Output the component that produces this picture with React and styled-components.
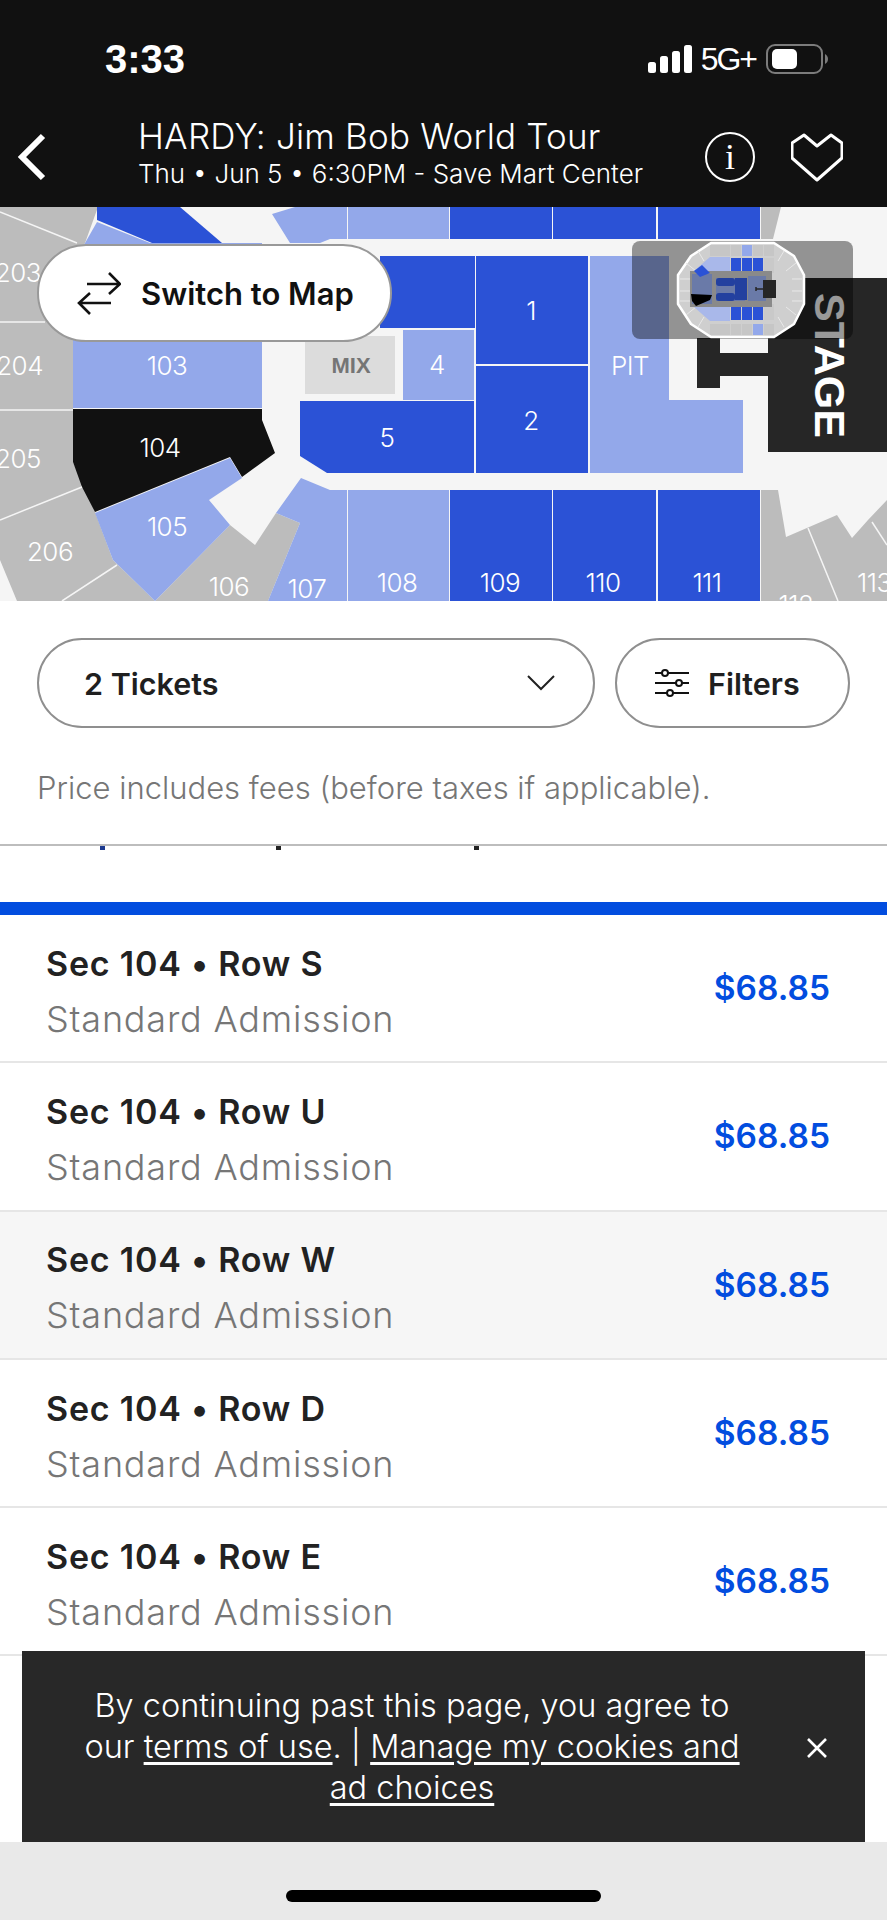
import styled, { createGlobalStyle } from "styled-components";

const FONT = `"Inter", "Lato", sans-serif`;
const DARK = "#2b52d6";
const LIGHT = "#93a8ea";
const GRAY = "#bcbcbc";
const BLUE = "#024ddf";

const tickets = [
  { row: "S" },
  { row: "U" },
  { row: "W", active: true },
  { row: "D" },
  { row: "E" },
];

const sections = [
  { fill: GRAY, points: "0,207 98,207 85,243 73,270 73,462 95,512 113,560 155,601 17,601 0,560" },
  { fill: GRAY, points: "155,601 230,525 255,545 276,513 300,523 268,601" },
  { fill: GRAY, points: "761,207 781,207 773,239 761,239" },
  { fill: GRAY, points: "761,490 778,490 786,537 837,515 852,538 868,520 887,500 887,601 761,601" },
  { fill: DARK, points: "97,207 180,207 222,243 152,243 97,220" },
  { fill: LIGHT, points: "85,243 97,222 150,243 262,243 262,408 73,408 73,270" },
  { fill: LIGHT, points: "272,214 295,207 347,207 347,239 330,239 320,243 290,243" },
  { fill: LIGHT, points: "348,207 449,207 449,239 348,239" },
  { fill: DARK, points: "450,207 552,207 552,239 450,239" },
  { fill: DARK, points: "553,207 656,207 656,239 553,239" },
  { fill: DARK, points: "658,207 760,207 760,239 658,239" },
  { fill: DARK, points: "380,256 475,256 475,328 380,328" },
  { fill: DARK, points: "476,256 588,256 588,364 476,364" },
  { fill: DARK, points: "476,366 588,366 588,473 476,473" },
  { fill: LIGHT, points: "403,330 474,330 474,400 403,400" },
  { fill: "#dcdcdc", points: "305,336 395,336 395,394 305,394" },
  { fill: DARK, points: "300,401 474,401 474,473 327,473 300,456" },
  { fill: LIGHT, points: "590,256 669,256 669,400 743,400 743,473 590,473" },
  { fill: LIGHT, points: "301,478 330,490 347,490 347,601 268,601 300,523 276,513" },
  { fill: LIGHT, points: "348,490 449,490 449,601 348,601" },
  { fill: DARK, points: "450,490 552,490 552,601 450,601" },
  { fill: DARK, points: "553,490 656,490 656,601 553,601" },
  { fill: DARK, points: "658,490 760,490 760,601 658,601" },
  { fill: "#111", points: "73,409 262,409 262,420 275,453 242,477 230,457 95,512 82,487 73,462" },
  { fill: LIGHT, points: "95,513 230,458 242,478 209,500 230,525 155,601 113,560" },
  { fill: "#262626", points: "768,278 887,278 887,452 768,452 768,376 720,376 720,388 697,388 697,338 720,338 720,353 768,353" },
];

const seams = [
  "0,212 77,243",
  "0,322 45,322",
  "0,410 73,410",
  "0,520 82,487",
  "62,601 117,565",
  "808,528 838,601",
  "872,522 887,545",
];

const labels = [
  { text: "203", x: 41, y: 272, anchor: "end" },
  { text: "204", x: 43, y: 365, anchor: "end" },
  { text: "205", x: 41, y: 458, anchor: "end" },
  { text: "206", x: 50, y: 551 },
  { text: "103", x: 167, y: 365 },
  { text: "104", x: 160, y: 447 },
  { text: "105", x: 167, y: 526 },
  { text: "106", x: 229, y: 586 },
  { text: "107", x: 307, y: 588 },
  { text: "108", x: 397, y: 582 },
  { text: "109", x: 500, y: 582 },
  { text: "110", x: 603, y: 582 },
  { text: "111", x: 707, y: 582 },
  { text: "112", x: 796, y: 604 },
  { text: "113", x: 857, y: 582, anchor: "start" },
  { text: "1", x: 531, y: 310 },
  { text: "2", x: 531, y: 420 },
  { text: "4", x: 437, y: 364 },
  { text: "5", x: 387, y: 437 },
  { text: "PIT", x: 630, y: 365 },
];

function SeatMap() {
  return (
    <MapSvg viewBox="0 207 887 394">
      {sections.map((s) => (
        <polygon key={s.points} points={s.points} fill={s.fill} />
      ))}
      {seams.map((points) => (
        <polyline key={points} points={points} stroke="#f5f5f5" strokeWidth="1.5" fill="none" />
      ))}
      {labels.map((l) => (
        <text
          key={l.text}
          x={l.x}
          y={l.y}
          textAnchor={l.anchor || "middle"}
          dominantBaseline="central"
          fill="#fff"
          fontSize="26"
          fontWeight="300"
          letterSpacing="-0.5"
          fontFamily={FONT}
        >
          {l.text}
        </text>
      ))}
      <text
        x="351"
        y="365"
        textAnchor="middle"
        dominantBaseline="central"
        fill="#757575"
        fontSize="22"
        fontWeight="700"
        fontFamily={`"Liberation Sans", sans-serif`}
      >
        MIX
      </text>
      <text
        transform="translate(830 365.5) rotate(90)"
        textAnchor="middle"
        dominantBaseline="central"
        fill="#fff"
        fontSize="43"
        fontWeight="700"
        fontFamily={`"Liberation Sans", sans-serif`}
      >
        STAGE
      </text>
    </MapSvg>
  );
}

function MiniMap() {
  const tops = [55, 66, 77, 88];
  const colsTop = [34, 44, 55, 66, 77, 88];
  return (
    <svg width="130" height="98" viewBox="0 0 130 98">
      <polygon
        points="35,2 98,2 118,15 128,34 128,63 118,83 98,96 35,96 15,83 2,63 2,34 15,15"
        fill="#cfcfcf"
        stroke="#fff"
        strokeWidth="2.5"
        strokeLinejoin="round"
      />
      {colsTop.map((x) => (
        <g key={x}>
          <rect x={x} y="4" width="10" height="11" fill={x === 66 ? LIGHT : "#c6c6c6"} />
          <rect x={x} y="83" width="10" height="11" fill={x === 77 ? LIGHT : "#c6c6c6"} />
        </g>
      ))}
      <path
        d="M4 38H14M4 50H14M4 60H14M116 38H126M116 50H126M116 60H126M10 22L20 30M10 74L20 66M120 22L110 30M120 74L110 66M22 10L28 20M22 86L28 76M108 10L102 20M108 86L102 76"
        stroke="#e8e8e8"
        strokeWidth="1"
        fill="none"
      />
      <polygon points="18,30 34,16 54,16 54,80 34,80 18,66" fill="#a9b8ea" />
      {tops.map((x) => (
        <g key={x}>
          <rect x={x} y="17" width="10" height="15" fill={x === 88 ? "#c9c9c9" : DARK} />
          <rect x={x} y="63" width="10" height="16" fill={x === 88 ? "#c9c9c9" : DARK} />
        </g>
      ))}
      <rect x="14" y="30" width="82" height="36" fill="#8a8a8a" />
      <rect x="16" y="33" width="20" height="30" fill="#6a7aa8" />
      <rect x="72" y="35" width="18" height="25" fill="#6a7aa8" />
      <rect x="40" y="37" width="29" height="23" fill="#6a7aa8" />
      <rect x="40" y="37" width="19" height="8" rx="3" fill="#23409f" />
      <rect x="59" y="37" width="12" height="22" fill="#23409f" />
      <rect x="40" y="52" width="19" height="8" rx="3" fill="#23409f" />
      <polygon points="15,53 36,54 34,59 20,65 16,60" fill="#000" />
      <polygon points="18,30 26,24 34,32 24,36" fill={DARK} />
      <rect x="87" y="39" width="13" height="18" fill="#262626" />
      <path d="M80 46V50M80 48H87" stroke="#262626" strokeWidth="1.5" fill="none" />
    </svg>
  );
}

export default function App() {
  return (
    <>
      <GlobalStyle />
      <Page>
        <Header>
          <StatusBar>
            <Clock>3:33</Clock>
            <StatusIcons>
              <svg width="45" height="28" viewBox="0 0 45 28">
                <rect x="0" y="17" width="8" height="11" rx="2.5" fill="#fff" />
                <rect x="12" y="11" width="8" height="17" rx="2.5" fill="#fff" />
                <rect x="24" y="6" width="8" height="22" rx="2.5" fill="#fff" />
                <rect x="36" y="0" width="8" height="28" rx="2.5" fill="#fff" />
              </svg>
              <Network>5G+</Network>
              <svg width="63" height="30" viewBox="0 0 63 30">
                <rect x="1" y="1" width="55" height="28" rx="8" fill="none" stroke="#7c7c7c" strokeWidth="2" />
                <rect x="6" y="5" width="25" height="20" rx="5" fill="#fff" />
                <path d="M59 10c2 1 3 3 3 5s-1 4-3 5z" fill="#7c7c7c" />
              </svg>
            </StatusIcons>
          </StatusBar>
          <NavBar>
            <BackButton>
              <svg width="30" height="48" viewBox="0 0 30 48">
                <path d="M26 3L5 24l21 21" fill="none" stroke="#fff" strokeWidth="6" />
              </svg>
            </BackButton>
            <EventInfo>
              <EventTitle>HARDY: Jim Bob World Tour</EventTitle>
              <EventMeta>Thu • Jun 5 • 6:30PM - Save Mart Center</EventMeta>
            </EventInfo>
            <InfoIcon>i</InfoIcon>
            <HeartIcon width="52" height="49" viewBox="0 0 52 49">
              <path
                d="M13 2L26 13 40 2 51 10V25L26 47 1 25V10z"
                fill="none"
                stroke="#fff"
                strokeWidth="3"
                strokeLinejoin="round"
              />
            </HeartIcon>
          </NavBar>
        </Header>

        <MapArea>
          <SeatMap />
          <SwitchButton>
            <svg width="44" height="43" viewBox="0 0 44 43">
              <path
                d="M10 12H43M32 1l11 11-11 10M34 31H2M13 21L2 31l11 11"
                fill="none"
                stroke="#111"
                strokeWidth="2.6"
              />
            </svg>
            Switch to Map
          </SwitchButton>
          <Overview>
            <MiniMap />
          </Overview>
        </MapArea>

        <Controls>
          <ControlRow>
            <TicketSelect>
              2 Tickets
              <svg width="28" height="16" viewBox="0 0 28 16">
                <path d="M1 1l13 13L27 1" fill="none" stroke="#222" strokeWidth="2" />
              </svg>
            </TicketSelect>
            <FilterButton>
              <svg width="34" height="30" viewBox="0 0 34 30">
                <path d="M0 5H34M0 15H34M0 25H34" stroke="#111" strokeWidth="2.2" />
                <circle cx="10" cy="5" r="3" fill="#fff" stroke="#111" strokeWidth="2" />
                <circle cx="24" cy="15" r="3" fill="#fff" stroke="#111" strokeWidth="2" />
                <circle cx="15" cy="25" r="3" fill="#fff" stroke="#111" strokeWidth="2" />
              </svg>
              Filters
            </FilterButton>
          </ControlRow>
          <PriceNote>Price includes fees (before taxes if applicable).</PriceNote>
        </Controls>

        <ClippedRow>
          <Speck $left={100} $color="#1c3a8f" />
          <Speck $left={276} />
          <Speck $left={474} />
        </ClippedRow>
        <Accent />

        {tickets.map((t) => (
          <TicketRow key={t.row} $active={t.active}>
            <div>
              <RowTitle>Sec 104 • Row {t.row}</RowTitle>
              <RowSub>Standard Admission</RowSub>
            </div>
            <Price>$68.85</Price>
          </TicketRow>
        ))}

        <HomeArea>
          <HomeBar />
        </HomeArea>

        <CookieBanner>
          <CookieText>
            By continuing past this page, you agree to our <a>terms of use</a>. |{" "}
            <a>Manage my cookies and ad choices</a>
          </CookieText>
          <CloseIcon width="22" height="22" viewBox="0 0 22 22">
            <path d="M2 2l18 18M20 2L2 20" stroke="#fff" strokeWidth="2.6" />
          </CloseIcon>
        </CookieBanner>
      </Page>
    </>
  );
}

const GlobalStyle = createGlobalStyle`
  html, body {
    margin: 0;
    padding: 0;
    background: #fff;
  }
  * {
    box-sizing: border-box;
  }
`;

const Page = styled.div`
  position: relative;
  width: 887px;
  height: 1920px;
  display: flex;
  flex-direction: column;
  overflow: hidden;
  background: #fff;
  font-family: ${FONT};
`;

const Header = styled.header`
  height: 207px;
  background: #111;
  color: #fff;
`;

const StatusBar = styled.div`
  height: 115px;
  padding: 44px 58px 0 105px;
  display: flex;
  justify-content: space-between;
  align-items: flex-start;
`;

const Clock = styled.div`
  font-family: "Liberation Sans", sans-serif;
  font-size: 40px;
  line-height: 30px;
  font-weight: 700;
`;

const StatusIcons = styled.div`
  display: flex;
  align-items: center;
  gap: 8px;
`;

const Network = styled.span`
  font-family: "Liberation Sans", sans-serif;
  font-size: 32px;
  letter-spacing: -2px;
  line-height: 30px;
  margin-right: 2px;
`;

const NavBar = styled.div`
  display: flex;
  align-items: center;
  padding: 0 44px 0 17px;
`;

const BackButton = styled.div`
  width: 121px;
  margin-top: 8px;
  display: flex;
`;

const EventInfo = styled.div`
  flex: 1;
`;

const EventTitle = styled.div`
  font-size: 35px;
  font-weight: 300;
  letter-spacing: 0.2px;
  line-height: 42px;
`;

const EventMeta = styled.div`
  font-size: 26px;
  font-weight: 300;
  line-height: 34px;
`;

const InfoIcon = styled.div`
  width: 50px;
  height: 50px;
  margin: 8px 36px 0 0;
  border: 2.5px solid #fff;
  border-radius: 50%;
  display: flex;
  align-items: center;
  justify-content: center;
  font-family: "Liberation Serif", serif;
  font-size: 36px;
`;

const HeartIcon = styled.svg`
  margin-top: 8px;
`;

const MapArea = styled.div`
  position: relative;
  height: 394px;
  background: #f5f5f5;
`;

const MapSvg = styled.svg`
  display: block;
  width: 887px;
  height: 394px;
`;

const SwitchButton = styled.div`
  position: absolute;
  left: 37px;
  top: 37px;
  width: 355px;
  height: 98px;
  display: flex;
  align-items: center;
  gap: 20px;
  padding-left: 38px;
  background: #fff;
  border: 2px solid #999;
  border-radius: 49px;
  color: #111;
  font-size: 31px;
  font-weight: 600;
`;

const Overview = styled.div`
  position: absolute;
  left: 632px;
  top: 34px;
  width: 221px;
  height: 98px;
  padding-left: 44px;
  background: rgba(0, 0, 0, 0.4);
  border-radius: 8px;
`;

const Controls = styled.div`
  height: 245px;
  padding: 37px 37px 0;
  border-bottom: 2px solid #bdbdbd;
`;

const ControlRow = styled.div`
  display: flex;
  gap: 20px;
`;

const Pill = styled.div`
  height: 90px;
  display: flex;
  align-items: center;
  border: 2px solid #8f8f8f;
  border-radius: 45px;
  color: #1f1f1f;
  font-size: 30.5px;
  font-weight: 600;
`;

const TicketSelect = styled(Pill)`
  width: 558px;
  padding: 0 38px 0 45px;
  justify-content: space-between;
`;

const FilterButton = styled(Pill)`
  width: 235px;
  padding-left: 38px;
  gap: 19px;
`;

const PriceNote = styled.div`
  margin-top: 40px;
  color: #767676;
  font-size: 31px;
  font-weight: 300;
  line-height: 40px;
`;

const ClippedRow = styled.div`
  position: relative;
  height: 56px;
  flex: none;
`;

const Speck = styled.span`
  position: absolute;
  top: 0;
  left: ${(p) => p.$left}px;
  width: 5px;
  height: 4px;
  background: ${(p) => p.$color || "#222"};
`;

const Accent = styled.div`
  height: 13px;
  flex: none;
  background: ${BLUE};
`;

const TicketRow = styled.div`
  height: 148.3px;
  flex: none;
  padding: 6px 57px 0 46px;
  display: flex;
  align-items: center;
  justify-content: space-between;
  border-bottom: 2px solid #e6e6e6;
  background: ${(p) => (p.$active ? "#f6f6f6" : "#fff")};
`;

const RowTitle = styled.div`
  color: #222;
  font-size: 34px;
  font-weight: 600;
  letter-spacing: 0.8px;
  line-height: 40px;
`;

const RowSub = styled.div`
  margin-top: 15px;
  color: #767676;
  font-size: 36px;
  font-weight: 300;
  letter-spacing: 0.8px;
  line-height: 40px;
`;

const Price = styled.div`
  margin-top: -6px;
  color: ${BLUE};
  font-size: 33.5px;
  font-weight: 600;
`;

const HomeArea = styled.div`
  margin-top: auto;
  height: 78px;
  flex: none;
  padding-top: 48px;
  display: flex;
  justify-content: center;
  background: #e9e9e9;
`;

const HomeBar = styled.div`
  width: 315px;
  height: 12px;
  border-radius: 6px;
  background: #000;
`;

const CookieBanner = styled.div`
  position: absolute;
  left: 22px;
  bottom: 78px;
  width: 843px;
  height: 191px;
  display: flex;
  align-items: center;
  background: #282828;
  color: #fff;
`;

const CookieText = styled.div`
  width: 660px;
  margin-left: 60px;
  text-align: center;
  font-size: 32.5px;
  font-weight: 300;
  line-height: 41px;

  a {
    text-decoration: underline;
    text-underline-offset: 4px;
  }
`;

const CloseIcon = styled.svg`
  margin-left: 64px;
  margin-top: 2px;
`;
